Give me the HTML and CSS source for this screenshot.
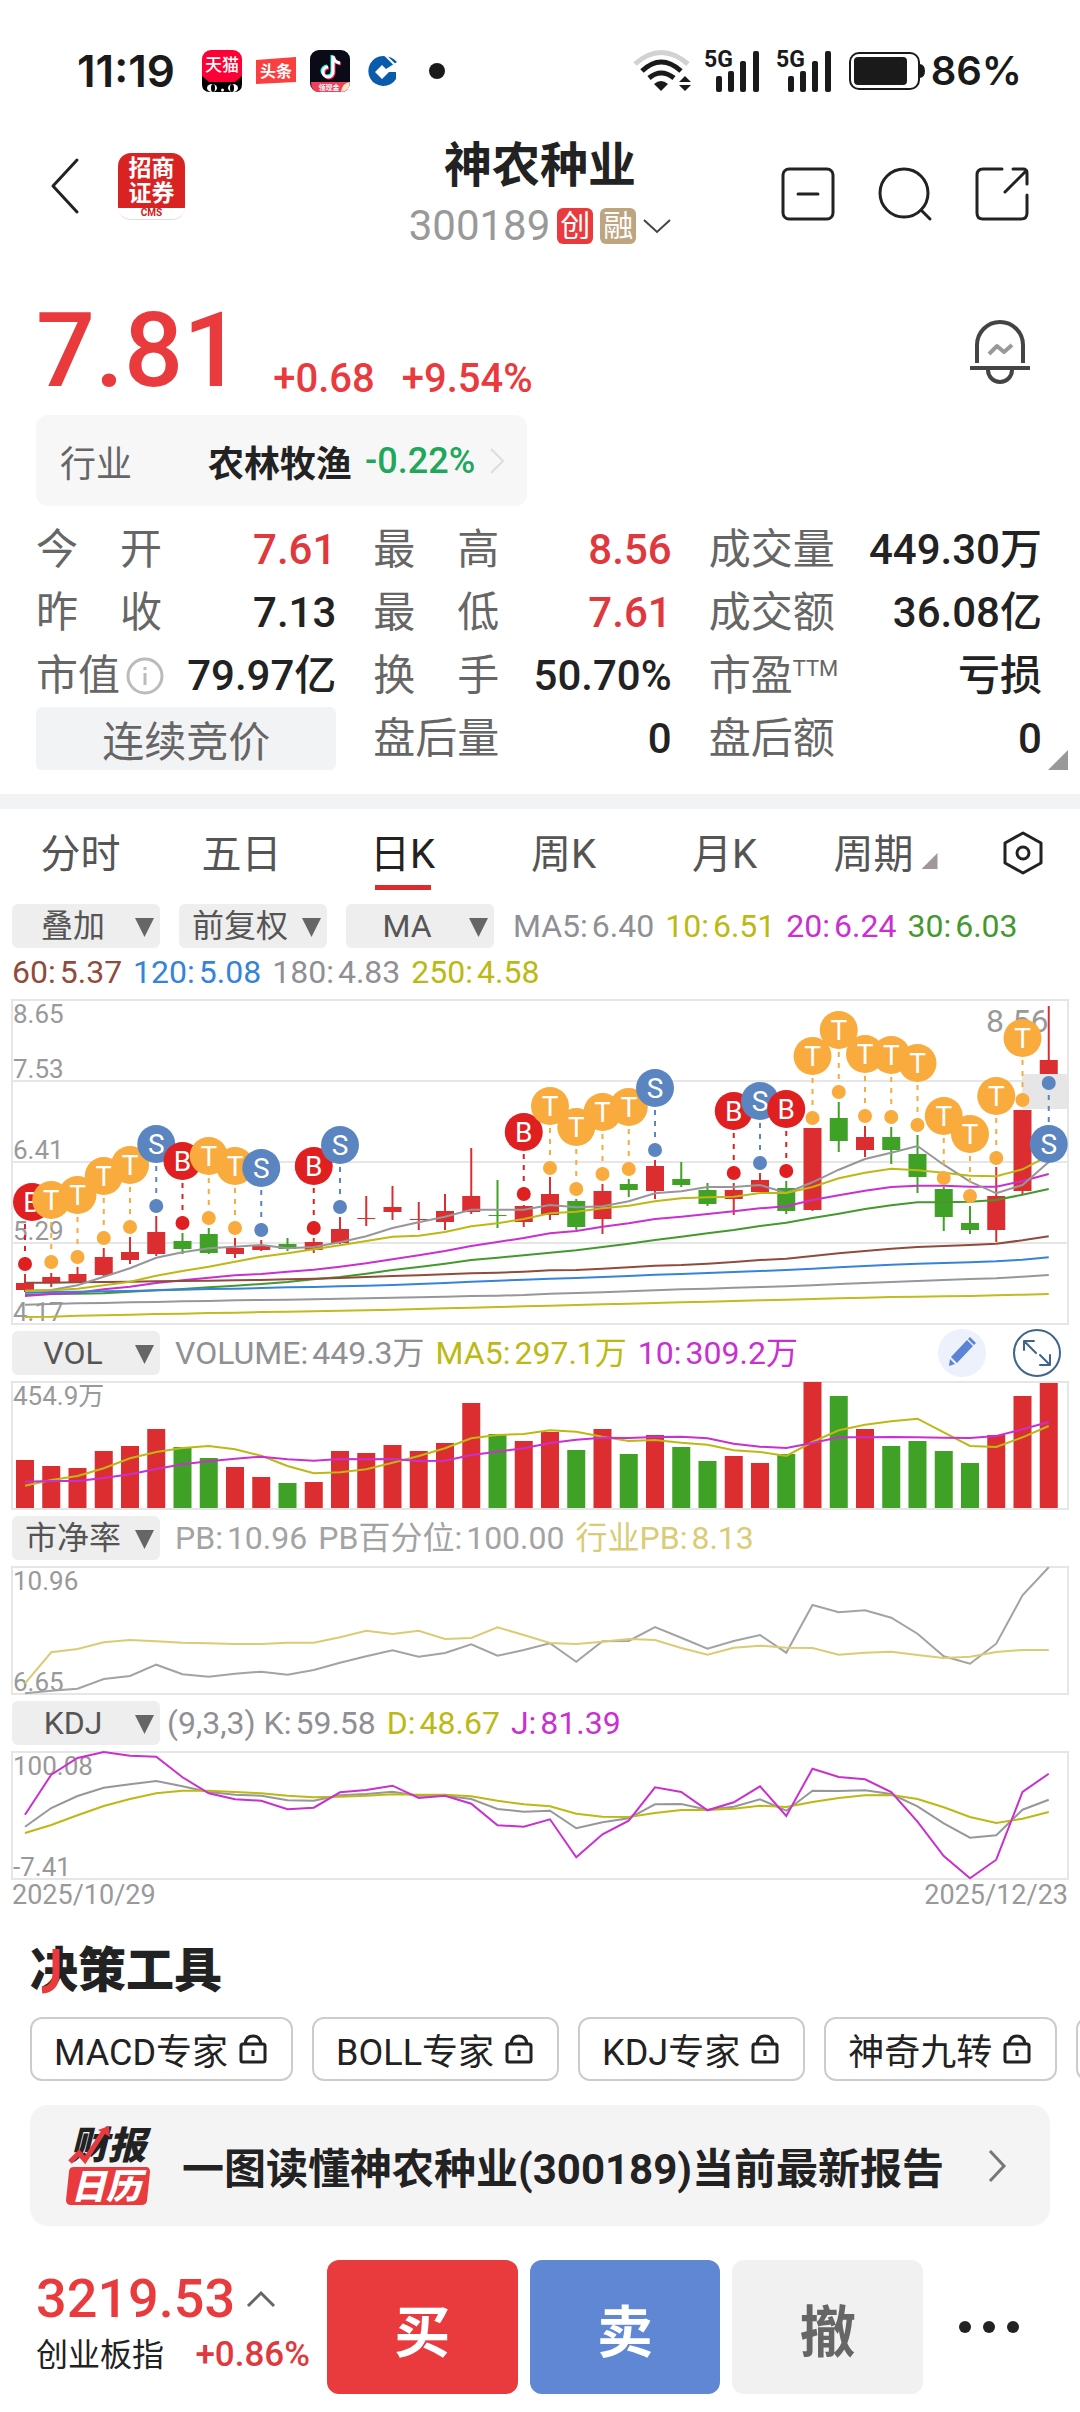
FILE: index.html
```html
<!DOCTYPE html>
<html lang="zh-CN">
  <head>
    <meta charset="UTF-8" />
    <meta name="viewport" content="width=device-width, initial-scale=1.0" />
    <title>神农种业 300189</title>
    <link rel="stylesheet" href="styles.css">
  </head>
  <body>
    <div class="status-bar">
      <span class="clock">11:19</span>
      <svg class="app-icon" width="40" height="42" viewBox="0 0 40 42">
        <rect width="40" height="42" rx="9" fill="#ff0036" />
        <path d="M0 26l7 6h26l7-6v8q0 8-8 8H8q-8 0-8-8z" fill="#000" />
        <ellipse cx="10" cy="38" rx="5" ry="4" fill="#fff" />
        <ellipse cx="31" cy="38" rx="5" ry="4" fill="#fff" />
        <ellipse cx="11" cy="38" rx="2" ry="4" />
        <ellipse cx="30" cy="38" rx="2" ry="4" />
        <circle cx="20.500" cy="40" r="1.500" fill="#fff" />
        <text x="20" y="21" font-size="17" font-weight="500" fill="#fff" text-anchor="middle">天猫</text>
      </svg>
      <svg class="app-icon" width="40" height="28" viewBox="0 0 40 28">
        <path d="M0 3L40 0V25L0 27z" fill="#fb3f3f" />
        <text x="20" y="20" font-size="16" font-weight="700" fill="#fff" text-anchor="middle">头条</text>
      </svg>
      <svg class="app-icon" width="40" height="42" viewBox="0 0 40 42">
        <rect width="40" height="42" rx="9" fill="#0b0b18" />
        <path d="M1 32h38q1 10-8 10H9q-8 0-8-10z" fill="#f0405a" />
        <path d="M31 42q1-9 9-10 0 9-9 10z" fill="#ffe6c8" />
        <g fill="none" stroke-width="3">
          <path d="M22 5v16a5 5 0 1 1-5-5M22 6q1 6 7 7" stroke="#25f4ee" />
          <path d="M24 7v16a5 5 0 1 1-5-5M24 7q1 6 7 7" stroke="#fe2c55" />
          <path d="M23 6v16a5 5 0 1 1-5-5M23 6q1 6 7 7" stroke="#fff" />
        </g>
        <text x="19" y="40" font-size="7" font-weight="700" fill="#fff" text-anchor="middle">领现金</text>
      </svg>
      <svg class="bank-icon" width="30" height="32" viewBox="0 0 30 32">
        <path d="M15 1a15 15 0 1 0 13 23V17H21L14 24 7 17 14 10 18 14 29 7Q24 1 15 1z" fill="#0a5bab" />
        <path d="M17 0L29 12" stroke="#fff" stroke-width="2" />
      </svg>
      <span class="more-dot"></span>
      <svg class="wifi" width="58" height="42" viewBox="0 0 58 42">
        <g fill="none" stroke="#1a1a1a" stroke-width="5">
          <path d="M2 14Q28-9 55 14" stroke="#d2d2d2" />
          <path d="M9 21Q28 3 48 21" />
          <path d="M16 28Q28 18 41 28" />
        </g>
        <path d="M21 34q7-6 14 0l-7 7z" fill="#1a1a1a" />
        <path d="M46 32l6-6 6 6zM46 35h12l-6 6z" fill="#1a1a1a" />
      </svg>
      <svg class="signal" width="54" height="42" viewBox="0 0 54 42">
        <text x="-1" y="17" font-size="23" font-weight="700" fill="#1a1a1a">5G</text>
        <g fill="#1a1a1a">
          <rect x="11" y="26" width="6" height="16" rx="2" />
          <rect x="23" y="21" width="6" height="21" rx="2" />
          <rect x="35" y="11" width="6" height="31" rx="2" />
          <rect x="48" y="1" width="6" height="41" rx="2" />
        </g>
      </svg>
      <svg class="signal" width="54" height="42" viewBox="0 0 54 42">
        <text x="-1" y="17" font-size="23" font-weight="700" fill="#1a1a1a">5G</text>
        <g fill="#1a1a1a">
          <rect x="11" y="26" width="6" height="16" rx="2" />
          <rect x="23" y="21" width="6" height="21" rx="2" />
          <rect x="35" y="11" width="6" height="31" rx="2" />
          <rect x="48" y="1" width="6" height="41" rx="2" />
        </g>
      </svg>
      <svg class="battery" width="76" height="38" viewBox="0 0 76 38">
        <rect x="1" y="1" width="69" height="36" rx="9" fill="none" stroke="#1a1a1a" stroke-width="2" />
        <rect x="5" y="5" width="53" height="28" rx="4" fill="#1a1a1a" />
        <path d="M71 12q5 1 5 7t-5 7z" fill="#1a1a1a" />
      </svg>
      <span class="battery-text">86%</span>
    </div>

    <header class="header">
      <div class="header-left">
        <button class="icon-btn" aria-label="返回">
          <svg width="27" height="54" viewBox="0 0 27 54"><path d="M26 1L2 27 26 53" /></svg>
        </button>
        <a href="#" class="logo" aria-label="招商证券">
          <span>招商</span>
          <span>证券</span>
          <small>CMS</small>
        </a>
      </div>
      <div class="stock">
        <h1>神农种业</h1>
        <p class="code">
          300189 <span class="tag tag-red">创</span><span class="tag tag-gold">融</span>
          <svg width="28" height="16" viewBox="0 0 28 16"><path d="M1 2l13 12L27 2" /></svg>
        </p>
      </div>
      <div class="header-right">
        <button class="icon-btn" aria-label="移除自选">
          <svg width="54" height="54" viewBox="0 0 54 54"><rect x="2" y="2" width="50" height="50" rx="6" /><path d="M17 27h20" /></svg>
        </button>
        <button class="icon-btn" aria-label="搜索">
          <svg width="54" height="54" viewBox="0 0 54 54"><circle cx="26" cy="26" r="24" /><path d="M43 43l9 9" /></svg>
        </button>
        <button class="icon-btn" aria-label="分享">
          <svg width="54" height="54" viewBox="0 0 54 54"><path d="M27 2H8Q2 2 2 8V46Q2 52 8 52H46Q52 52 52 46V28M38 2H48Q52 2 52 6V17M30 25L51 4" /></svg>
        </button>
      </div>
    </header>

    <main>
      <section class="quote">
        <div class="price-row">
          <span class="price">7.81</span>
          <span class="change">+0.68</span>
          <span class="change">+9.54%</span>
          <button class="icon-btn bell" aria-label="预警">
            <svg width="62" height="62" viewBox="0 0 62 62">
              <path d="M8 42V24a23 23 0 0 1 46 0V42M1 47h60M19 49a12 12 0 0 0 24 0" />
              <path d="M20 33l8-8 7 6 8-7" stroke="#999" />
            </svg>
          </button>
        </div>

        <a href="#" class="industry">
          <span class="industry-label">行业</span>
          <strong>农林牧渔</strong>
          <span class="green">-0.22%</span>
          <svg width="16" height="26" viewBox="0 0 16 26"><path d="M2 1l12 12L2 25" /></svg>
        </a>

        <dl class="stats">
          <div><dt><span>今</span><span>开</span></dt><dd class="red">7.61</dd></div>
          <div><dt><span>最</span><span>高</span></dt><dd class="red">8.56</dd></div>
          <div><dt>成交量</dt><dd>449.30万</dd></div>
          <div><dt><span>昨</span><span>收</span></dt><dd>7.13</dd></div>
          <div><dt><span>最</span><span>低</span></dt><dd class="red">7.61</dd></div>
          <div><dt>成交额</dt><dd>36.08亿</dd></div>
          <div>
            <dt>市值<svg width="38" height="38" viewBox="0 0 38 38"><circle cx="19" cy="19" r="17" /><path d="M19 16v12M19 10v3" /></svg></dt>
            <dd>79.97亿</dd>
          </div>
          <div><dt><span>换</span><span>手</span></dt><dd>50.70%</dd></div>
          <div><dt>市盈<sup>TTM</sup></dt><dd>亏损</dd></div>
          <div><button class="auction">连续竞价</button></div>
          <div><dt>盘后量</dt><dd>0</dd></div>
          <div class="more"><dt>盘后额</dt><dd>0</dd></div>
        </dl>
      </section>

      <nav class="tabs">
        <a href="#">分时</a>
        <a href="#">五日</a>
        <a href="#" class="active">日K</a>
        <a href="#">周K</a>
        <a href="#">月K</a>
        <a href="#" class="period">周期</a>
        <button class="icon-btn" aria-label="设置">
          <svg width="40" height="44" viewBox="0 0 40 44"><path d="M20 2L38 12V32L20 42 2 32V12z" /><circle cx="20" cy="22" r="6" /></svg>
        </button>
      </nav>

      <section class="charts">
        <div class="chart-bar">
          <label class="picker"><select aria-label="叠加"><option>叠加</option></select></label>
          <label class="picker"><select aria-label="复权"><option>前复权</option></select></label>
          <label class="picker"><select aria-label="主图指标"><option>MA</option></select></label>
          <span class="gray">MA5:<b>6.40</b></span>
          <span class="yellow">10:<b>6.51</b></span>
          <span class="magenta">20:<b>6.24</b></span>
          <span class="green-line">30:<b>6.03</b></span>
          <span class="brown">60:<b>5.37</b></span>
          <span class="blue">120:<b>5.08</b></span>
          <span class="gray">180:<b>4.83</b></span>
          <span class="yellow">250:<b>4.58</b></span>
        </div>
        <svg id="k-chart" viewBox="0 0 1056 324"></svg>

        <div class="chart-bar panel-bar">
          <label class="picker"><select aria-label="副图一"><option>VOL</option></select></label>
          <span class="gray">VOLUME:<b>449.3万</b></span>
          <span class="yellow">MA5:<b>297.1万</b></span>
          <span class="magenta">10:<b>309.2万</b></span>
          <div class="bar-actions">
            <button class="icon-btn" aria-label="画线">
              <svg width="48" height="48" viewBox="0 0 48 48">
                <circle cx="24" cy="24" r="24" fill="#ecf1fb" stroke="none" />
                <path d="M11 37l1-7 5 5zM13 28L29 11l6 6-16 17zM30 10l2-2 6 6-2 2z" fill="#5b83d6" stroke="none" />
              </svg>
            </button>
            <button class="icon-btn" aria-label="全屏">
              <svg class="expand" width="48" height="48" viewBox="0 0 48 48"><circle cx="24" cy="24" r="23" /><path d="M11 21V12H21M12 13l11 11M37 26V36H27M36 35L27 26" /></svg>
            </button>
          </div>
        </div>
        <svg id="vol-chart" viewBox="0 0 1056 127"></svg>

        <div class="chart-bar panel-bar">
          <label class="picker"><select aria-label="副图二"><option>市净率</option></select></label>
          <span class="light-gray">PB:<b>10.96</b></span>
          <span class="light-gray">PB百分位:<b>100.00</b></span>
          <span class="sand">行业PB:<b>8.13</b></span>
        </div>
        <svg id="pb-chart" viewBox="0 0 1056 127"></svg>

        <div class="chart-bar panel-bar kdj-bar">
          <label class="picker"><select aria-label="副图三"><option>KDJ</option></select></label>
          <span class="gray">(9,3,3) K:<b>59.58</b></span>
          <span class="yellow">D:<b>48.67</b></span>
          <span class="magenta">J:<b>81.39</b></span>
        </div>
        <svg id="kdj-chart" viewBox="0 0 1056 127"></svg>

        <div class="dates"><span>2025/10/29</span><span>2025/12/23</span></div>
      </section>

      <section class="tools">
        <h2>决策工具
          <svg width="20" height="48" viewBox="0 0 20 48"><path d="M16 2V26Q16 42 2 43" /></svg>
        </h2>
        <div class="chips">
          <button class="chip">MACD专家<svg width="28" height="30" viewBox="0 0 28 30"><rect x="2" y="10" width="24" height="18" rx="2" /><path d="M6 10Q7 2 14 2T22 10M14 16v6" /></svg></button>
          <button class="chip">BOLL专家<svg width="28" height="30" viewBox="0 0 28 30"><rect x="2" y="10" width="24" height="18" rx="2" /><path d="M6 10Q7 2 14 2T22 10M14 16v6" /></svg></button>
          <button class="chip">KDJ专家<svg width="28" height="30" viewBox="0 0 28 30"><rect x="2" y="10" width="24" height="18" rx="2" /><path d="M6 10Q7 2 14 2T22 10M14 16v6" /></svg></button>
          <button class="chip">神奇九转<svg width="28" height="30" viewBox="0 0 28 30"><rect x="2" y="10" width="24" height="18" rx="2" /><path d="M6 10Q7 2 14 2T22 10M14 16v6" /></svg></button>
          <button class="chip" aria-label="更多工具"></button>
        </div>

        <a href="#" class="report">
          <svg width="84" height="80" viewBox="0 0 84 80">
            <text x="4" y="33" font-size="38" font-weight="900" font-style="italic" fill="#222">财报</text>
            <path d="M4 36l9-9 6 7L38 5" fill="none" stroke="#e93a3e" stroke-width="5" />
            <path d="M32 4l11-4 1 11z" fill="#e93a3e" />
            <path d="M8 41H80Q84 41 84 46L81 74Q81 79 75 79H5Q0 79 0 74L3 46Q3 41 8 41z" fill="#e93a3e" />
            <text x="5" y="73" font-size="35" font-weight="900" font-style="italic" fill="#fff">日历</text>
          </svg>
          <strong>一图读懂神农种业(300189)当前最新报告</strong>
          <svg class="arrow" width="18" height="32" viewBox="0 0 18 32"><path d="M2 1l14 15L2 31" /></svg>
        </a>
      </section>
    </main>

    <footer class="trade-bar">
      <div class="index">
        <p class="index-value">3219.53 <svg width="28" height="16" viewBox="0 0 28 16"><path d="M1 15L14 2l13 13" /></svg></p>
        <p class="index-name"><span>创业板指</span><span class="index-pct">+0.86%</span></p>
      </div>
      <button class="trade buy">买</button>
      <button class="trade sell">卖</button>
      <button class="trade cancel">撤</button>
      <button class="icon-btn dots" aria-label="更多">
        <svg width="62" height="14" viewBox="0 0 62 14"><circle cx="7" cy="7" r="6" /><circle cx="31" cy="7" r="6" /><circle cx="55" cy="7" r="6" /></svg>
      </button>
    </footer>

    <script src="charts.js"></script>
  </body>
</html>
```

FILE: styles.css
```css
* {
  box-sizing: border-box;
}
body {
  margin: 0;
  background: #fff;
  color: #222;
  font-family: Roboto, "Noto Sans CJK SC", sans-serif;
  overflow-x: hidden;
}
h1,
h2,
p,
dl,
dd {
  margin: 0;
}
a {
  color: inherit;
  text-decoration: none;
}
button,
select {
  font-family: inherit;
  color: inherit;
  border: 0;
  padding: 0;
  margin: 0;
}
svg {
  display: block;
  flex: none;
  overflow: visible;
}
.icon-btn {
  background: none;
}
.icon-btn svg {
  fill: none;
  stroke: #222;
  stroke-width: 3;
  stroke-linecap: round;
  stroke-linejoin: round;
}
.red {
  color: #e0393d;
}
.green {
  color: #1fa75c;
}

/* phone status bar */
.status-bar {
  display: flex;
  align-items: center;
  height: 94px;
  padding: 48px 58px 0 77px;
  color: #1a1a1a;
}
.clock {
  font-size: 44px;
  font-weight: 600;
  line-height: 46px;
  font-family: Inter, Roboto, sans-serif;
  margin-right: 27px;
}
.app-icon {
  margin-right: 14px;
}
.bank-icon {
  margin-left: 4px;
}
.more-dot {
  width: 16px;
  height: 16px;
  margin-left: 31px;
  border-radius: 50%;
  background: #1a1a1a;
}
.wifi {
  margin-left: auto;
  margin-right: 14px;
}
.signal {
  margin-right: 18px;
}
.battery-text {
  font-size: 40px;
  font-weight: 600;
  line-height: 46px;
  font-family: Inter, Roboto, sans-serif;
  margin-left: 6px;
}

/* header */
.header {
  display: grid;
  grid-template-columns: 1fr auto 1fr;
  align-items: center;
  padding: 42px 51px 0;
}
.header-left {
  display: flex;
  align-items: center;
  gap: 40px;
  padding-bottom: 10px;
}
.logo {
  display: flex;
  flex-direction: column;
  align-items: center;
  width: 67px;
  height: 67px;
  padding-top: 3px;
  border-radius: 13px;
  background: linear-gradient(#d92323 83%, #fff 83%);
  color: #fff;
  font-size: 23px;
  font-weight: 700;
  line-height: 25px;
  border-bottom: 1px solid #ddd;
}
.logo small {
  color: #c22;
  font-size: 10px;
  line-height: 14px;
}
.stock {
  text-align: center;
}
.stock h1 {
  font-size: 48px;
  line-height: 60px;
  font-weight: 700;
}
.code {
  display: flex;
  align-items: center;
  gap: 7px;
  margin-top: 10px;
  font-size: 42px;
  line-height: 40px;
  color: #999;
}
.code svg {
  fill: none;
  stroke: #444;
  stroke-width: 2;
}
.tag {
  width: 36px;
  height: 36px;
  border-radius: 6px;
  color: #fff;
  font-size: 30px;
  line-height: 36px;
}
.tag-red {
  background: #e93a3e;
}
.tag-gold {
  background: #bfa480;
}
.header-right {
  display: flex;
  justify-content: flex-end;
  gap: 43px;
  padding-top: 6px;
}

/* quote */
.quote {
  padding: 49px 38px 24px 36px;
  border-bottom: 15px solid #f2f3f5;
}
.price-row {
  display: flex;
  align-items: flex-end;
  color: #e93a3e;
}
.price {
  font-size: 104px;
  line-height: 112px;
  font-weight: 500;
  margin-right: 4px;
}
.change {
  font-size: 40px;
  line-height: 42px;
  font-weight: 500;
  padding-bottom: 7px;
  margin-left: 27px;
}
.bell {
  margin-left: auto;
  margin-right: 11px;
  padding-bottom: 24px;
}
.bell svg {
  stroke: #444;
  stroke-width: 4;
  stroke-linecap: butt;
}
.industry {
  display: inline-flex;
  align-items: center;
  height: 91px;
  margin-top: 8px;
  padding: 0 22px 0 24px;
  border-radius: 12px;
  background: #f7f7f7;
  font-size: 36px;
}
.industry-label {
  color: #666;
  margin-right: 76px;
}
.industry .green {
  font-weight: 500;
  margin-left: 13px;
  margin-right: 14px;
}
.industry svg {
  fill: none;
  stroke: #ddd;
  stroke-width: 2;
}
.stats {
  display: grid;
  grid-template-columns: 300fr 298fr 333fr;
  column-gap: 37px;
  margin-top: 12px;
  font-size: 42px;
  line-height: 63px;
}
.stats div {
  display: flex;
  justify-content: space-between;
  white-space: nowrap;
}
.stats dt {
  display: flex;
  align-items: center;
  justify-content: space-between;
  min-width: 126px;
  color: #666;
}
.stats dd {
  font-weight: 500;
}
.stats dt svg {
  fill: none;
  stroke: #bbb;
  stroke-width: 3;
  margin-left: 6px;
}
.stats sup {
  align-self: flex-start;
  font-size: 22px;
  line-height: 50px;
}
.stats .more {
  position: relative;
}
.more::after {
  content: "";
  position: absolute;
  right: -26px;
  bottom: 0;
  width: 20px;
  height: 20px;
  background: #999;
  clip-path: polygon(100% 0, 100% 100%, 0 100%);
}
.auction {
  flex: 1;
  border-radius: 6px;
  background: #f2f3f5;
  color: #666;
  font-size: 42px;
}

/* tabs */
.tabs {
  display: flex;
  height: 81px;
  font-size: 40px;
  line-height: 92px;
  color: #555;
}
.tabs a {
  flex: 161;
  display: flex;
  justify-content: center;
}
.tabs .active {
  position: relative;
  color: #222;
}
.active::after {
  content: "";
  position: absolute;
  bottom: 0;
  width: 56px;
  height: 5px;
  background: #dd2c2c;
}
.period::after {
  content: "";
  width: 16px;
  height: 16px;
  margin: 44px 0 0 8px;
  background: #a09898;
  clip-path: polygon(100% 0, 100% 100%, 0 100%);
}
.tabs .icon-btn {
  flex: 114;
  display: flex;
  justify-content: center;
  padding: 22px 0 0;
}

/* charts */
.charts {
  padding: 14px 12px 0;
}
.charts > svg {
  width: 100%;
  height: auto;
}
.chart-bar {
  display: flex;
  flex-wrap: wrap;
  align-items: center;
  gap: 8px 11px;
  padding-bottom: 12px;
  font-size: 32px;
  line-height: 32px;
}
.chart-bar b {
  font-weight: inherit;
  margin-left: 4px;
}
.picker {
  position: relative;
  margin-right: 8px;
}
.picker select {
  display: block;
  appearance: none;
  width: 148px;
  height: 44px;
  padding-right: 26px;
  border-radius: 6px;
  background: #eee;
  color: #555;
  font-size: 32px;
  text-align: center;
  text-align-last: center;
}
.picker::after {
  content: "";
  position: absolute;
  right: 6px;
  top: 14px;
  width: 19px;
  height: 19px;
  background: #666;
  clip-path: polygon(0 0, 100% 0, 50% 100%);
  pointer-events: none;
}
.panel-bar {
  height: 58px;
  padding: 0;
}
.panel-bar .picker {
  margin-right: 4px;
}
.kdj-bar .picker {
  margin-right: -4px;
}
.bar-actions {
  display: flex;
  gap: 27px;
  margin-left: auto;
  margin-right: 7px;
}
.icon-btn .expand {
  stroke: #41658a;
  stroke-width: 2;
}
.gray {
  color: #909094;
}
.light-gray {
  color: #a3a3a3;
}
.yellow {
  color: #bdb914;
}
.magenta {
  color: #c930cf;
}
.green-line {
  color: #43992e;
}
.brown {
  color: #904b3c;
}
.blue {
  color: #3683d9;
}
.sand {
  color: #d9cc74;
}
.frame {
  fill: none;
  stroke: #e6e6e6;
  stroke-width: 2;
}
.line {
  fill: none;
  stroke-width: 2;
}
.axis {
  fill: #999;
  font-size: 26px;
}
.peak {
  fill: #999;
  font-size: 32px;
}
.mark {
  fill: #fff;
  font-size: 28px;
  text-anchor: middle;
}
.dates {
  display: flex;
  justify-content: space-between;
  font-size: 27px;
  line-height: 32px;
  color: #999;
}

/* tools */
.tools {
  padding: 32px 30px 0;
}
.tools h2 {
  position: relative;
  font-size: 48px;
  line-height: 56px;
  font-weight: 900;
}
.tools h2 svg {
  position: absolute;
  left: 10px;
  top: 4px;
  fill: none;
  stroke: #e93a3e;
  stroke-width: 7;
}
.chips {
  display: flex;
  gap: 19px;
  margin-top: 18px;
  margin-right: -30px;
  overflow: hidden;
}
.chip {
  display: flex;
  flex: none;
  align-items: center;
  gap: 11px;
  height: 64px;
  padding: 0 24px 0 22px;
  border: 2px solid #ccc;
  border-radius: 12px;
  background: #fff;
  font-size: 36px;
}
.chip svg {
  fill: none;
  stroke: #222;
  stroke-width: 3;
}
.report {
  display: flex;
  align-items: center;
  height: 121px;
  margin-top: 24px;
  padding: 0 44px 0 36px;
  border-radius: 18px;
  background: #f4f4f4;
}
.report strong {
  flex: 1;
  margin-left: 32px;
  font-size: 42px;
  font-weight: 700;
}
.report .arrow {
  fill: none;
  stroke: #777;
  stroke-width: 3;
}

/* bottom trade bar */
.trade-bar {
  display: flex;
  align-items: center;
  gap: 12px;
  margin-top: 34px;
  padding: 0 0 18px 36px;
}
.index {
  width: 279px;
  padding-bottom: 12px;
  white-space: nowrap;
}
.index-value {
  display: flex;
  align-items: center;
  gap: 12px;
  font-size: 54px;
  font-weight: 500;
  line-height: 68px;
  color: #e93a3e;
}
.index-value svg {
  fill: none;
  stroke: #666;
  stroke-width: 3;
}
.index-name {
  display: flex;
  align-items: center;
  justify-content: space-between;
  font-size: 32px;
  line-height: 44px;
  padding-right: 5px;
}
.index-pct {
  font-size: 35px;
  font-weight: 500;
  color: #e0393d;
}
.trade {
  flex: 1;
  height: 134px;
  border-radius: 12px;
  color: #fff;
  font-size: 56px;
  font-weight: 700;
}
.buy {
  background: #e93a3e;
}
.sell {
  background: #5f87d3;
}
.cancel {
  background: #f1f1f1;
  color: #666;
}
.dots {
  flex: 0 0 145px;
  display: flex;
  justify-content: center;
  padding-right: 38px;
}
.dots svg {
  fill: #222;
  stroke: none;
}
```

FILE: charts.js
```js
const RED = '#dc2e30';
const GREEN = '#3fa126';
const GRAY = '#97979b';
const YELLOW = '#bdb914';
const MAGENTA = '#c930cf';
const MARKS = { B: '#e02020', T: '#f9ab3e', S: '#5b85c0' };

const STEP = 26.25;
const x = i => 13 + i * STEP;

// high, body top, body bottom, low, up?
const candles = [
  [274, 283, 290, 292, 1], [273, 277, 283, 287, 1], [267, 274, 283, 283, 1], [248, 257, 275, 276, 1],
  [237, 252, 260, 264, 1], [216, 232, 254, 256, 1], [233, 241, 249, 254, 0], [228, 234, 253, 254, 0],
  [238, 248, 254, 258, 1], [240, 245, 250, 251, 1], [238, 244, 249, 251, 0], [238, 242, 250, 253, 1],
  [217, 229, 243, 244, 1], [196, 218, 219, 226, 1], [186, 207, 212, 220, 1], [202, 219, 220, 230, 1],
  [194, 211, 222, 230, 1], [148, 196, 212, 214, 1], [180, 215, 216, 228, 0], [205, 206, 222, 227, 1],
  [177, 194, 215, 220, 1], [199, 201, 227, 230, 0], [184, 191, 219, 234, 1], [179, 184, 190, 197, 0],
  [160, 166, 191, 199, 1], [162, 179, 185, 187, 0], [183, 190, 204, 206, 0], [183, 190, 199, 215, 1],
  [173, 180, 192, 192, 1], [181, 188, 211, 214, 0], [128, 128, 210, 211, 1], [102, 118, 141, 152, 0],
  [126, 137, 150, 157, 1], [127, 137, 150, 164, 0], [135, 154, 177, 193, 0], [187, 189, 217, 231, 0],
  [206, 223, 230, 234, 0], [167, 196, 230, 242, 1], [110, 110, 191, 194, 1], [6, 60, 74, 74, 1]
];

// bar index, mark type, y of the dot
const marks = [
  [0, 'B', 264], [1, 'T', 262], [2, 'T', 257], [3, 'T', 238], [4, 'T', 227], [5, 'S', 206], [6, 'B', 223],
  [7, 'T', 218], [8, 'T', 228], [9, 'S', 230], [11, 'B', 228], [12, 'S', 207], [19, 'B', 194], [20, 'T', 168],
  [21, 'T', 189], [22, 'T', 174], [23, 'T', 169], [24, 'S', 150], [27, 'B', 173], [28, 'S', 163], [29, 'B', 171],
  [30, 'T', 118], [31, 'T', 92], [32, 'T', 116], [33, 'T', 117], [34, 'T', 125], [35, 'T', 178], [36, 'T', 196],
  [37, 'T', 158], [38, 'T', 100], [39, 'S', 83]
];

const averages = [
  ['#c0bb1e', [981,980,977,976,974,972,971,969,968,966,965,964,962,961,959,957,955,953,951,949,947,945,943,941,939,937,935,933,931,929,927,925,923,921,920,919,918,916,914,912]],
  [GRAY, [944,942,940,939,937,936,934,933,931,930,929,928,926,925,923,922,920,918,917,915,911,909,907,904,901,898,896,893,891,889,886,882,879,876,873,870,867,865,860,855]],
  ['#43992e', [914,912,911,910,905,901,897,892,887,882,876,868,861,851,840,831,821,810,803,796,788,781,771,761,750,740,730,720,708,698,684,671,657,646,637,637,635,630,614,597]],
  [MAGENTA, [918,912,908,898,890,879,871,863,856,852,845,839,830,820,808,796,783,768,756,744,730,723,710,700,687,680,672,664,655,649,630,616,602,591,587,587,590,590,573,552]],
  ['#3683d9', [908,906,905,904,903,901,899,897,896,894,892,891,889,887,885,882,879,875,872,869,866,864,861,858,854,852,849,846,843,840,836,832,828,824,821,819,817,814,809,802]],
  ['#904b3c', [878,878,877,876,875,874,873,872,871,870,868,866,864,861,858,856,853,850,848,845,841,840,836,832,827,825,821,816,810,806,798,790,783,776,771,768,765,761,751,739]],
  [GRAY, [902,900,886,860,835,803,787,775,770,765,775,771,757,739,714,697,680,659,659,659,645,652,649,634,610,604,591,591,585,609,577,539,507,488,468,524,575,610,585,516]],
  [YELLOW, [902,901,896,886,875,857,843,830,815,800,790,778,766,753,740,737,726,709,700,687,670,665,655,647,634,625,622,620,609,609,591,565,548,536,541,548,557,559,538,497]]
];

const volume = [420,438,444,393,378,327,381,414,441,471,489,486,393,399,375,393,369,249,342,363,336,390,327,402,345,381,423,408,429,402,186,228,327,378,363,393,429,345,228,189];
const volumeMa5 = [497,480,468,445,415,396,384,378,388,407,438,460,457,448,428,408,385,355,345,342,331,335,350,363,360,368,374,391,396,408,366,331,314,304,296,337,378,381,352,318];
const volumeMa10 = [485,483,483,474,463,447,433,424,416,410,418,422,417,418,417,423,422,405,395,385,369,359,353,354,351,350,355,371,380,384,369,352,352,351,352,353,354,348,328,306];

const pb = [580,572,566,537,528,494,523,530,521,515,524,510,488,469,451,470,459,433,467,450,430,485,424,423,381,413,446,423,405,458,315,337,331,353,401,469,491,431,286,202];
const industryPb = [550,457,447,427,420,424,428,430,432,432,428,428,412,392,402,392,417,414,382,405,429,432,425,417,420,444,464,443,437,443,444,464,458,455,465,474,470,456,450,450];

const k = [980,924,888,863,853,843,859,876,884,887,901,902,886,882,875,887,887,897,927,935,932,985,967,955,913,912,929,920,898,932,872,873,871,882,919,970,1013,1006,929,899];
const d = [999,975,946,918,897,880,872,872,876,880,887,892,890,887,883,884,884,889,902,913,919,941,950,951,939,930,930,926,917,921,906,894,886,885,897,922,951,969,956,936];
const j = [944,824,774,756,767,770,832,880,898,902,928,923,877,870,857,894,887,911,976,980,958,1072,1003,962,862,876,931,907,859,948,806,831,838,876,965,1068,1135,1079,876,821];

// series are stored at three units per pixel
function line(values, color, top) {
  const points = values.map((v, i) => `${x(i)},${(v / 3 - top).toFixed(1)}`).join(' ');
  return `<polyline class="line" stroke="${color}" points="${points}" />`;
}

function frame(height) {
  return `<rect class="frame" x="0" y="0" width="1056" height="${height}" />`;
}

function label(text, y) {
  return `<text class="axis" x="1" y="${y}">${text}</text>`;
}

function drawK() {
  let out = frame(324);
  [81, 162, 243].forEach(y => {
    out += `<path class="frame" d="M0 ${y}H1056" />`;
  });
  out += '<rect x="1010" y="74" width="46" height="35" fill="#e6e6e6" />';
  out += label('8.65', 23) + label('7.53', 78) + label('6.41', 159) + label('5.29', 240) + label('4.17', 321);
  out += '<text class="peak" x="974" y="32">8.56</text>';
  candles.forEach(([high, top, bottom, low, up], i) => {
    const color = up ? RED : GREEN;
    out += `<path d="M${x(i)} ${high}V${low}" stroke="${color}" stroke-width="2" />`;
    out += `<rect x="${x(i) - 9}" y="${top}" width="18" height="${bottom - top}" fill="${color}" />`;
  });
  averages.forEach(([color, values]) => {
    out += line(values, color, 10);
  });
  marks.forEach(([i, type, dot]) => {
    const color = MARKS[type];
    const last = i === candles.length - 1;
    const cy = last ? dot + 61 : dot - 62;
    const cx = Math.max(x(i), 20);
    out += `<path d="M${x(i)} ${cy}V${dot}" stroke="${color}" stroke-width="2" stroke-dasharray="5 6" />`;
    out += `<circle cx="${x(i)}" cy="${dot}" r="7" fill="${color}" />`;
    out += `<circle cx="${cx}" cy="${cy}" r="19" fill="${color}" />`;
    out += `<text class="mark" x="${cx}" y="${cy + 10}">${type}</text>`;
  });
  document.getElementById('k-chart').innerHTML = out;
}

function drawVolume() {
  let out = frame(127) + label('454.9万', 23);
  volume.forEach((v, i) => {
    const y = v / 3 - 62;
    out += `<rect x="${x(i) - 9}" y="${y}" width="18" height="${126 - y}" fill="${candles[i][4] ? RED : GREEN}" />`;
  });
  out += line(volumeMa5, YELLOW, 62) + line(volumeMa10, MAGENTA, 62);
  document.getElementById('vol-chart').innerHTML = out;
}

drawK();
drawVolume();
document.getElementById('pb-chart').innerHTML =
  frame(127) + label('10.96', 23) + label('6.65', 124) + line(pb, '#a3a3a3', 67) + line(industryPb, '#d9cc74', 67);
document.getElementById('kdj-chart').innerHTML =
  frame(127) + label('100.08', 23) + label('-7.41', 124) + line(k, GRAY, 252) + line(d, YELLOW, 252) + line(j, MAGENTA, 252);
```
